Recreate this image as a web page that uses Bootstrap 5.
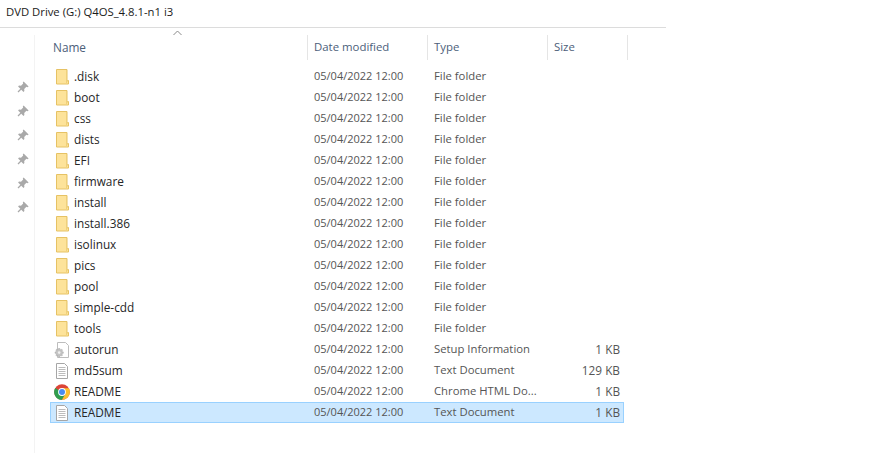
<!DOCTYPE html>
<html lang="en"><head><meta charset="utf-8"><title>DVD Drive</title>
<link href="https://cdn.jsdelivr.net/npm/bootstrap@5.3.0/dist/css/bootstrap.min.css" rel="stylesheet">
<style>
html,body{height:459px;overflow:hidden;background:#fff}
body{font-family:"Open Sans","Noto Sans",sans-serif;font-size:11.3px;color:#555;line-height:21px}
.title-bar{height:28px;width:666px;padding-left:6px;border-bottom:1px solid #dcdcdc;color:#1a1a1a;line-height:24px;white-space:nowrap}
.side-pane{width:35px;height:418px;margin-top:7px;border-right:1px solid #f3f3f3;padding-top:45px;gap:10px;flex:none}
.side-pane svg{width:14px;height:14px;display:block;margin-left:16px}
.list-pane{width:590px;padding-left:15px;margin-top:7px}
.head-row{height:25px;position:relative;color:#4c607a;line-height:24px;margin-bottom:6px;font-size:11.4px}
.hcell{height:25px;border-right:1px solid #e5e5e5;padding-left:6px;flex:none}
.hcell.c-name{padding-left:3px;font-size:11.8px}
.sort-mark{position:absolute;left:123px;top:-5px;width:9px;height:6px}
.c-name{width:258px}.c-date{width:120px}.c-type{width:120px}.c-size{width:80px}
.file-row{height:21px;border:1px solid transparent;white-space:nowrap;width:574px}
.file-row.picked{background:#cce8ff;border-color:#99d1ff}
.fcell{flex:none;padding-left:6px;line-height:18px}
.file-row .c-date{font-size:11px}
.file-row .c-name{display:flex;align-items:center;padding-left:3px;gap:4px;color:#262626;width:257px;font-size:11.8px;line-height:19px;height:19px}
.file-row .c-name svg{width:16px;height:16px;flex:none}
.file-row .c-type{width:120px}
.file-row .c-size{width:76px;text-align:right;padding-right:4px;font-size:11.8px}
</style></head>
<body>
<svg width="0" height="0" class="d-block position-absolute">
<defs>
<symbol id="ic-folder" viewBox="0 0 16 16"><path d="M2.5.5h10.5v11.5l1.5-.5v3.5H2.5z" fill="#fde39a" stroke="#e6c264" stroke-width="1"/><path d="M12.5 1v13" stroke="#efd07a"/></symbol>
<symbol id="ic-doc" viewBox="0 0 16 16"><path d="M2.5.5h8l3 3v12h-11z" fill="#fff" stroke="#a6a6a6"/><path d="M4.5 4.5h7M4.5 6.5h7M4.5 8.5h7M4.5 10.5h7M4.5 12.5h7" stroke="#bcbcbc"/></symbol>
<symbol id="ic-setup" viewBox="0 0 16 16"><path d="M3.5.5h8l3 3v12h-11z" fill="#fff" stroke="#bdbdbd"/><path d="M5.9 6.5v1l1 .3.8-.6.9.9-.6.8.3 1h1v1.4h-1l-.3 1 .6.8-.9.9-.8-.6-1 .3v1H4.5v-1l-1-.3-.8.6-.9-.9.6-.8-.3-1h-1V9.9h1l.3-1-.6-.8.9-.9.8.6 1-.3v-1z" fill="#c4c4c4" stroke="#a3a3a3" stroke-width=".5"/><circle cx="5.2" cy="10.6" r="1.3" fill="#f0f0f0"/></symbol>
<symbol id="ic-chrome" viewBox="0 0 16 16"><circle cx="8" cy="8" r="7.8" fill="#dc4437"/><path d="M8 8 1.2 4.1A7.8 7.8 0 0 0 8 15.8l3.4-5.9z" fill="#2f9e4f"/><path d="M8 4.2h6.9A7.8 7.8 0 0 1 8 15.8l3.4-5.9z" fill="#fbc02d"/><circle cx="8" cy="8" r="3.9" fill="#fff"/><circle cx="8" cy="8" r="3" fill="#4a8cf0"/></symbol>
<symbol id="ic-pin" viewBox="0 0 14 14"><path d="M7.6 1.4 12.6 6.4 11.6 7.2 10.4 6.8 8.2 9 8.4 11 7.5 11.9 2.1 6.5 3 5.6 5 5.8 7.2 3.6 6.8 2.4Z" fill="#a9a9a9"/><path d="M5 9 2 12" stroke="#a9a9a9" stroke-width="1.3"/></symbol>
</defs></svg>

<div class="title-bar">DVD Drive (G:) Q4OS_4.8.1-n1 i3</div>
<div class="d-flex">
  <div class="side-pane d-flex flex-column">
    <svg><use href="#ic-pin"/></svg><svg><use href="#ic-pin"/></svg><svg><use href="#ic-pin"/></svg><svg><use href="#ic-pin"/></svg><svg><use href="#ic-pin"/></svg><svg><use href="#ic-pin"/></svg>
  </div>
  <div class="list-pane">
    <div class="head-row d-flex">
      <svg class="sort-mark" viewBox="0 0 9 6"><path d="M.5 5 4.5 1l4 4" fill="none" stroke="#8a8a8a"/></svg>
      <div class="hcell c-name">Name</div><div class="hcell c-date">Date modified</div><div class="hcell c-type">Type</div><div class="hcell c-size">Size</div>
    </div>
    <div class="d-flex file-row"><div class="fcell c-name"><svg><use href="#ic-folder"/></svg>.disk</div><div class="fcell c-date">05/04/2022 12:00</div><div class="fcell c-type">File folder</div><div class="fcell c-size"></div></div>
    <div class="d-flex file-row"><div class="fcell c-name"><svg><use href="#ic-folder"/></svg>boot</div><div class="fcell c-date">05/04/2022 12:00</div><div class="fcell c-type">File folder</div><div class="fcell c-size"></div></div>
    <div class="d-flex file-row"><div class="fcell c-name"><svg><use href="#ic-folder"/></svg>css</div><div class="fcell c-date">05/04/2022 12:00</div><div class="fcell c-type">File folder</div><div class="fcell c-size"></div></div>
    <div class="d-flex file-row"><div class="fcell c-name"><svg><use href="#ic-folder"/></svg>dists</div><div class="fcell c-date">05/04/2022 12:00</div><div class="fcell c-type">File folder</div><div class="fcell c-size"></div></div>
    <div class="d-flex file-row"><div class="fcell c-name"><svg><use href="#ic-folder"/></svg>EFI</div><div class="fcell c-date">05/04/2022 12:00</div><div class="fcell c-type">File folder</div><div class="fcell c-size"></div></div>
    <div class="d-flex file-row"><div class="fcell c-name"><svg><use href="#ic-folder"/></svg>firmware</div><div class="fcell c-date">05/04/2022 12:00</div><div class="fcell c-type">File folder</div><div class="fcell c-size"></div></div>
    <div class="d-flex file-row"><div class="fcell c-name"><svg><use href="#ic-folder"/></svg>install</div><div class="fcell c-date">05/04/2022 12:00</div><div class="fcell c-type">File folder</div><div class="fcell c-size"></div></div>
    <div class="d-flex file-row"><div class="fcell c-name"><svg><use href="#ic-folder"/></svg>install.386</div><div class="fcell c-date">05/04/2022 12:00</div><div class="fcell c-type">File folder</div><div class="fcell c-size"></div></div>
    <div class="d-flex file-row"><div class="fcell c-name"><svg><use href="#ic-folder"/></svg>isolinux</div><div class="fcell c-date">05/04/2022 12:00</div><div class="fcell c-type">File folder</div><div class="fcell c-size"></div></div>
    <div class="d-flex file-row"><div class="fcell c-name"><svg><use href="#ic-folder"/></svg>pics</div><div class="fcell c-date">05/04/2022 12:00</div><div class="fcell c-type">File folder</div><div class="fcell c-size"></div></div>
    <div class="d-flex file-row"><div class="fcell c-name"><svg><use href="#ic-folder"/></svg>pool</div><div class="fcell c-date">05/04/2022 12:00</div><div class="fcell c-type">File folder</div><div class="fcell c-size"></div></div>
    <div class="d-flex file-row"><div class="fcell c-name"><svg><use href="#ic-folder"/></svg>simple-cdd</div><div class="fcell c-date">05/04/2022 12:00</div><div class="fcell c-type">File folder</div><div class="fcell c-size"></div></div>
    <div class="d-flex file-row"><div class="fcell c-name"><svg><use href="#ic-folder"/></svg>tools</div><div class="fcell c-date">05/04/2022 12:00</div><div class="fcell c-type">File folder</div><div class="fcell c-size"></div></div>
    <div class="d-flex file-row"><div class="fcell c-name"><svg><use href="#ic-setup"/></svg>autorun</div><div class="fcell c-date">05/04/2022 12:00</div><div class="fcell c-type">Setup Information</div><div class="fcell c-size">1 KB</div></div>
    <div class="d-flex file-row"><div class="fcell c-name"><svg><use href="#ic-doc"/></svg>md5sum</div><div class="fcell c-date">05/04/2022 12:00</div><div class="fcell c-type">Text Document</div><div class="fcell c-size">129 KB</div></div>
    <div class="d-flex file-row"><div class="fcell c-name"><svg><use href="#ic-chrome"/></svg>README</div><div class="fcell c-date">05/04/2022 12:00</div><div class="fcell c-type">Chrome HTML Do...</div><div class="fcell c-size">1 KB</div></div>
    <div class="d-flex file-row picked"><div class="fcell c-name"><svg><use href="#ic-doc"/></svg>README</div><div class="fcell c-date">05/04/2022 12:00</div><div class="fcell c-type">Text Document</div><div class="fcell c-size">1 KB</div></div>
  </div>
</div>
</body></html>
